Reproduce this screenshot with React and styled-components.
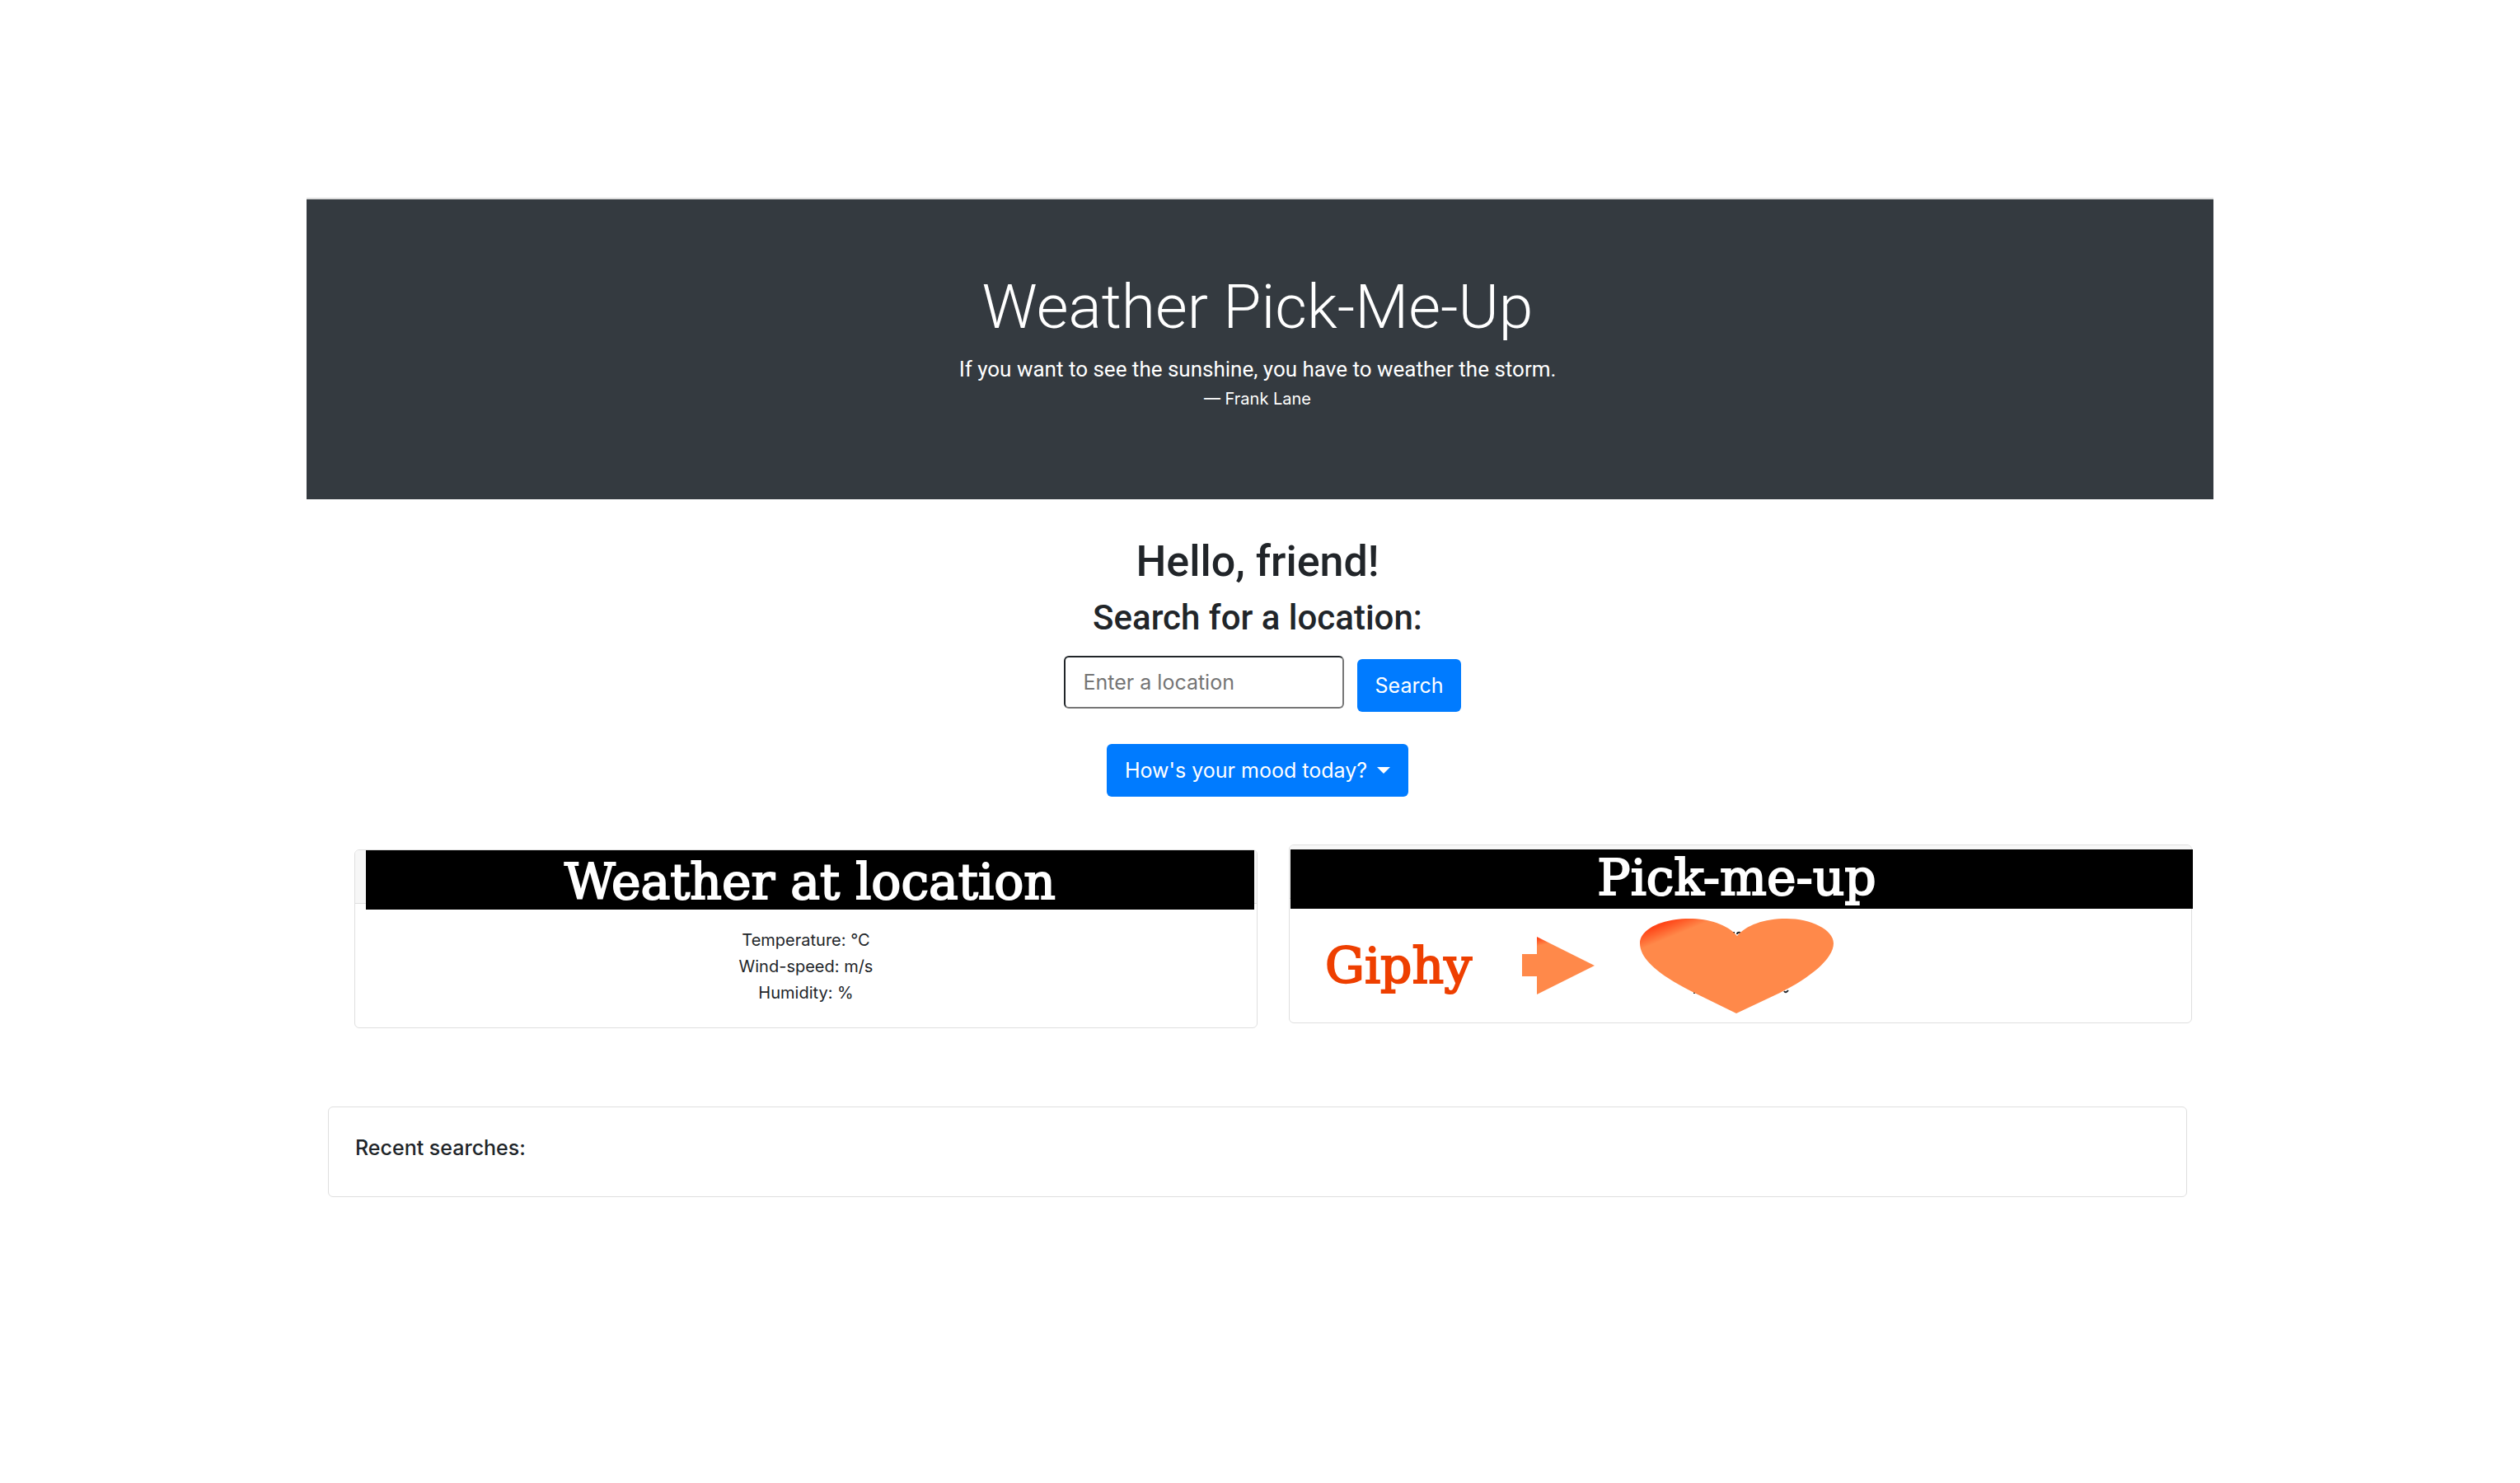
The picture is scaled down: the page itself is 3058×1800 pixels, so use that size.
import React from "react";
import styled, { createGlobalStyle, css } from "styled-components";

const GlobalStyle = createGlobalStyle`
  *, *::before, *::after { box-sizing: border-box; }
  body {
    margin: 0;
    background: #fff;
    color: #212529;
    font-family: Inter, "Liberation Sans", sans-serif;
    font-size: 25px;
    line-height: 40px;
  }
  h1, h2, h3, h4, p, blockquote, figure { margin: 0; }
`;

const Page = styled.div`
  max-width: 2314px;
  margin: 0 auto;
  padding-top: 240px;
`;

const Hero = styled.header`
  border-top: 2px solid #dcdcdc;
  background: #343a40;
  color: #fff;
  text-align: center;
  padding: 86px 32px 106px 26px;
`;

const HeroTitle = styled.h1`
  font-family: Roboto, "Liberation Sans", sans-serif;
  font-size: 75px;
  font-weight: 300;
  line-height: 88px;
  margin-bottom: 12px;
`;

const Quote = styled.p`
  font-family: Roboto, "Liberation Sans", sans-serif;
  font-size: 26px;
  line-height: 40px;
`;

const Author = styled.figcaption`
  font-size: 20px;
  line-height: 32px;
`;

const Main = styled.main`
  padding: 0 32px 0 26px;
`;

const Intro = styled.section`
  display: flex;
  flex-direction: column;
  align-items: center;
  padding-top: 44px;
`;

const Greeting = styled.h2`
  font-family: Roboto, "Liberation Sans", sans-serif;
  font-size: 52px;
  font-weight: 500;
  line-height: 64px;
  margin-bottom: 10px;
`;

const Prompt = styled.h3`
  font-family: Roboto, "Liberation Sans", sans-serif;
  font-size: 42px;
  font-weight: 500;
  line-height: 52px;
  margin-bottom: 20px;
`;

const SearchForm = styled.form`
  display: flex;
  align-items: flex-end;
  gap: 16px;
  height: 68px;
  margin-left: 12px;
`;

const SearchField = styled.input`
  align-self: flex-start;
  width: 340px;
  height: 64px;
  padding: 0 22px;
  border: 2px solid #767676;
  border-top-color: #212529;
  border-left-color: #212529;
  border-radius: 6px;
  background: #fff;
  color: #212529;
  font: inherit;
  &::placeholder { color: #757575; opacity: 1; }
`;

const Button = styled.button`
  display: inline-flex;
  align-items: center;
  height: 64px;
  padding: 0 22px;
  border: 0;
  border-radius: 6px;
  background: #007bff;
  color: #fff;
  font: inherit;
  cursor: pointer;
`;

const MoodButton = styled(Button)`
  margin-top: 39px;
  gap: 12px;
  &::after {
    content: "";
    border: 8px solid transparent;
    border-top-color: #fff;
    border-bottom: 0;
  }
`;

const Cards = styled.section`
  display: grid;
  grid-template-columns: 1fr 1fr;
  align-items: start;
  gap: 38px;
  margin: 58px -6px 0 32px;
`;

const Card = styled.article`
  border: 1px solid #dfdfdf;
  border-radius: 6px;
  background: #fff;
  ${(p) => p.$lowered && css`margin-top: 6px;`}
`;

const CardHeader = styled.div`
  height: 65px;
  padding: ${(p) => p.$inset};
  background: #f7f7f7;
  border-bottom: 1px solid #dfdfdf;
  border-radius: 5px 5px 0 0;
`;

const typewriter = css`
  font-family: "DejaVu Serif", "Liberation Serif", serif;
  font-size: 60px;
  font-weight: 400;
  -webkit-text-stroke: 2px currentColor;
  paint-order: stroke fill;
  stroke-linejoin: round;
`;

const CardTitle = styled.h4`
  position: relative;
  height: 72px;
  background: #000;
  color: #fff;
  ${typewriter}
  line-height: ${(p) => p.$line};
  text-align: center;
  ${(p) => p.$wide && css`
    margin-right: -2px;
    padding-right: 12px;
  `}
`;

const Readings = styled.div`
  height: 150px;
  padding-top: 28px;
  font-size: 20px;
  line-height: 32px;
  text-align: center;
`;

const Pick = styled.div`
  display: flex;
  align-items: center;
  height: 150px;
  padding: 12px 43px 0;
`;

const Giphy = styled.p`
  width: 239px;
  color: #ee3f00;
  ${typewriter}
  line-height: 72px;
`;

const Arrow = styled.svg`
  width: 88px;
  height: 70px;
  margin-right: 55px;
`;

const Heart = styled.svg`
  width: 236px;
  height: 117px;
`;

const Recent = styled.section`
  margin-top: 95px;
  height: 110px;
  padding: 29px 32px;
  border: 1px solid #dfdfdf;
  border-radius: 6px;
`;

const RecentTitle = styled.h4`
  font-size: 25px;
  font-weight: 500;
  line-height: 40px;
`;

export default function App() {
  return (
    <>
      <GlobalStyle />
      <Page>
        <Hero>
          <HeroTitle>Weather Pick-Me-Up</HeroTitle>
          <figure>
            <Quote>If you want to see the sunshine, you have to weather the storm.</Quote>
            <Author>— Frank Lane</Author>
          </figure>
        </Hero>
        <Main>
          <Intro>
            <Greeting>Hello, friend!</Greeting>
            <Prompt id="prompt">Search for a location:</Prompt>
            <SearchForm onSubmit={(e) => e.preventDefault()}>
              <SearchField type="text" placeholder="Enter a location" aria-labelledby="prompt" />
              <Button type="submit">Search</Button>
            </SearchForm>
            <MoodButton type="button" aria-haspopup="true">How's your mood today?</MoodButton>
          </Intro>
          <Cards>
            <Card $lowered>
              <CardHeader $inset="0 3px 0 13px">
                <CardTitle $line="76px">Weather at location</CardTitle>
              </CardHeader>
              <Readings>
                <p>Temperature: °C</p>
                <p>Wind-speed: m/s</p>
                <p>Humidity: %</p>
              </Readings>
            </Card>
            <Card>
              <CardHeader $inset="5px 0 0 1px">
                <CardTitle $line="68px" $wide>Pick-me-up</CardTitle>
              </CardHeader>
              <Pick>
                <Giphy>Giphy</Giphy>
                <Arrow viewBox="0 0 88 70" aria-hidden="true">
                  <defs>
                    <linearGradient id="arrowFill" gradientUnits="userSpaceOnUse" x1="18" y1="2" x2="20" y2="11">
                      <stop offset="0" stopColor="#ff4618" />
                      <stop offset="1" stopColor="#ff894a" />
                    </linearGradient>
                  </defs>
                  <path d="M0 21H18V0L88 35L18 70V48H0Z" fill="url(#arrowFill)" />
                </Arrow>
                <Heart viewBox="0 0 236 117" aria-hidden="true">
                  <defs>
                    <linearGradient id="heartFill" gradientUnits="userSpaceOnUse" x1="26" y1="8" x2="33" y2="25">
                      <stop offset="0" stopColor="#ff4618" />
                      <stop offset="1" stopColor="#ff894a" />
                    </linearGradient>
                  </defs>
                  <path
                    d="M114 17V19M118 20Q118 17 122 18M65 91H67M175 89Q177 92 180 88"
                    fill="none"
                    stroke="#212529"
                    strokeWidth="2"
                  />
                  <path
                    d="M118 22C106 8 84 1 60 1C26 1 0 14 0 31C0 52 28 72 66 91L117 116L170 91C206 73 235 50 235 31C235 14 207 1 178 1C150 1 129 9 118 22Z"
                    fill="url(#heartFill)"
                  />
                </Heart>
              </Pick>
            </Card>
          </Cards>
          <Recent>
            <RecentTitle>Recent searches:</RecentTitle>
          </Recent>
        </Main>
      </Page>
    </>
  );
}
